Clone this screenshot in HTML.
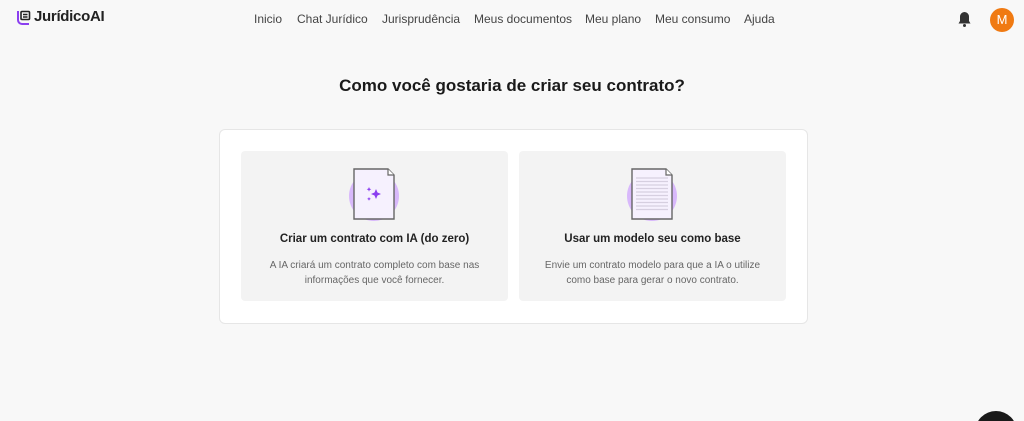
<!DOCTYPE html>
<html style="height:421px;overflow:hidden"><head><meta charset="utf-8"><style>
body{margin:0;width:1024px;height:421px;background:#f8f8f8;font-family:"Liberation Sans",sans-serif;position:relative;overflow:hidden;color:#111}
.nav{position:absolute;top:12px;font-size:12px;color:#444}
.nav span{position:absolute;white-space:nowrap}
.card{position:absolute;left:219px;top:129px;width:587px;height:193px;background:#fff;border:1px solid #e6e6e6;border-radius:6px}
.tile{position:absolute;top:151px;width:267px;height:150px;background:#f3f3f3;border-radius:4px;text-align:center}
.tile h3{position:absolute;top:82px;left:0;right:0;margin:0;font-size:11.5px;font-weight:bold;color:#222}
.tile p{position:absolute;top:107px;left:15px;right:15px;margin:0;font-size:10px;line-height:15px;color:#666}
</style></head><body>
<svg style="position:absolute;left:16px;top:10px" width="15" height="15" viewBox="0 0 15 15"><path d="M2 1v9a4 4 0 0 0 4 4h7" stroke="#8b3ff0" stroke-width="2" fill="none"/><rect x="5" y="1.5" width="8.5" height="8" rx="1" stroke="#222" stroke-width="1.6" fill="none"/><path d="M7 4.5h4.5M7 7h4.5" stroke="#222" stroke-width="1.4"/></svg>
<div style="position:absolute;left:34px;top:8px;font-size:15px;font-weight:bold;letter-spacing:-0.3px;color:#222">JurídicoAI</div>
<div class="nav">
<span style="left:254px">Inicio</span><span style="left:297px">Chat Jurídico</span><span style="left:382px">Jurisprudência</span><span style="left:474px">Meus documentos</span><span style="left:585px">Meu plano</span><span style="left:655px">Meu consumo</span><span style="left:744px">Ajuda</span>
</div>
<svg style="position:absolute;left:957px;top:11px" width="15" height="17" viewBox="0 0 15 17"><path d="M7.5 1a4.5 4.5 0 0 0-4.5 4.5V10l-1.5 2.5h12L12 10V5.5A4.5 4.5 0 0 0 7.5 1z" fill="#333"/><circle cx="7.5" cy="14.5" r="1.5" fill="#333"/></svg>
<div style="position:absolute;left:990px;top:8px;width:24px;height:24px;border-radius:50%;background:#f07a12;color:#fff;font-size:13px;text-align:center;line-height:24px">M</div>
<div style="position:absolute;left:0;right:0;top:76px;text-align:center;font-size:17px;font-weight:bold;color:#1a1a1a">Como você gostaria de criar seu contrato?</div>
<div class="card"></div>
<div class="tile" style="left:241px">
<svg style="position:absolute;left:106px;top:16px" width="56" height="56" viewBox="0 0 56 56"><circle cx="27" cy="29" r="25" fill="#d8b8fb"/><path d="M7 2h34l6 6v44H7z" fill="#f6f1fe" stroke="#666" stroke-width="1.4"/><path d="M41 2v6h6" fill="#fff" stroke="#666" stroke-width="1.2"/><path d="M29 22l1.5 3.5 3.5 1.5-3.5 1.5L29 32l-1.5-3.5L24 27l3.5-1.5z M22 20l.7 1.6 1.6.7-1.6.7-.7 1.6-.7-1.6-1.6-.7 1.6-.7z M22 30l.6 1.3 1.3.6-1.3.6-.6 1.3-.6-1.3-1.3-.6 1.3-.6z" fill="#8b3ff0"/></svg>
<h3>Criar um contrato com IA (do zero)</h3>
<p>A IA criará um contrato completo com base nas informações que você fornecer.</p>
</div>
<div class="tile" style="left:519px">
<svg style="position:absolute;left:106px;top:16px" width="56" height="56" viewBox="0 0 56 56"><circle cx="27" cy="29" r="25" fill="#d8b8fb"/><path d="M7 2h34l6 6v44H7z" fill="#f6f1fe" stroke="#666" stroke-width="1.4"/><path d="M41 2v6h6" fill="#fff" stroke="#666" stroke-width="1.2"/><g stroke="#d6cfe0" stroke-width="1.2"><path d="M11 11h32M11 14.5h32M11 18h32M11 21.5h32M11 25h32M11 28.5h32M11 32h32M11 35.5h32M11 39h32M11 42.5h32"/></g></svg>
<h3>Usar um modelo seu como base</h3>
<p>Envie um contrato modelo para que a IA o utilize como base para gerar o novo contrato.</p>
</div>
<div style="position:absolute;left:975px;top:411px;width:42px;height:10px;overflow:hidden"><div style="width:42px;height:42px;border-radius:50%;background:#1a1a1a"></div></div>
</body></html>
